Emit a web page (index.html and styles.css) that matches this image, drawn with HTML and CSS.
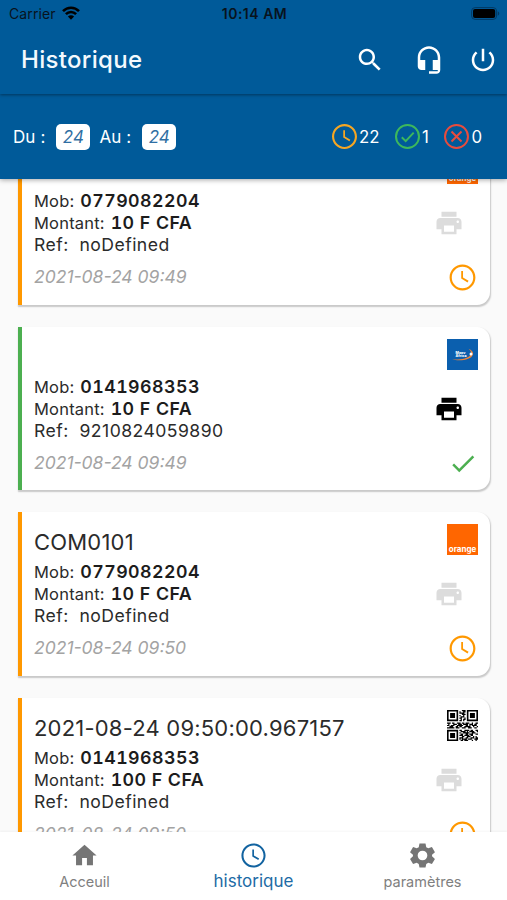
FILE: index.html
```html
<!DOCTYPE html>
<html lang="fr">
<head>
    <meta charset="utf-8" />
    <meta content="width=device-width, initial-scale=1.0" name="viewport" />
    <title>Historique</title>
    <link rel="stylesheet" href="styles.css">
</head>
<body>
    <!-- shared icons -->
    <svg class="icon-defs" aria-hidden="true">
        <symbol id="icon-clock" viewBox="0 0 24 24">
            <path d="M12 2C6.500 2 2 6.500 2 12s4.500 10 10 10 10-4.500 10-10S17.500 2 12 2zm0 18.300c-4.600 0-8.300-3.700-8.300-8.300S7.400 3.700 12 3.700s8.300 3.700 8.300 8.300-3.700 8.300-8.300 8.300z" />
            <path d="M12.400 7h-1.400v5.800l4.900 3 .8-1.300-4.300-2.500z" />
        </symbol>
        <symbol id="icon-print" viewBox="0 0 24 24">
            <path d="M19 8H5c-1.660 0-3 1.340-3 3v6h4v4h12v-4h4v-6c0-1.660-1.340-3-3-3zm-3 11H8v-5h8v5zm3-7c-.55 0-1-.45-1-1s.45-1 1-1 1 .45 1 1-.45 1-1 1zm-1-9H6v4h12V3z" />
        </symbol>
        <symbol id="icon-check" viewBox="0 0 24 24">
            <path d="M9 16.170L4.830 12l-1.420 1.410L9 19 21 7l-1.410-1.410z" />
        </symbol>
    </svg>

    <div class="app">
        <header class="header">
            <div class="status-bar">
                <div class="carrier">
                    <span>Carrier</span>
                    <svg class="wifi" viewBox="0 0 18 14">
                        <path d="M1 5.200C5.500.6 12.500.6 17 5.200" />
                        <path d="M3.900 8.100c2.900-2.900 7.300-2.900 10.200 0" />
                        <path class="wifi-dot" d="M9 13.800L5.900 10.500c1.700-1.700 4.500-1.700 6.200 0z" />
                    </svg>
                </div>
                <span class="time">10:14 AM</span>
                <svg class="battery" viewBox="0 0 29 13">
                    <rect class="battery-shell" x=".6" y=".6" width="25" height="11.800" rx="3.500" />
                    <rect x="2" y="2" width="22.200" height="9" rx="2" />
                    <path class="battery-tip" d="M26.800 4.300c2 .8 2 3.600 0 4.400z" />
                </svg>
            </div>
            <div class="toolbar">
                <h1 class="title">Historique</h1>
                <svg class="tool search" viewBox="0 0 24 24"><path d="M15.500 14h-.79l-.28-.27C15.410 12.590 16 11.110 16 9.500 16 5.910 13.090 3 9.500 3S3 5.910 3 9.500 5.910 16 9.500 16c1.610 0 3.090-.59 4.230-1.570l.27.28v.79l5 4.990L20.490 19l-4.990-5zm-6 0C7.010 14 5 11.990 5 9.500S7.010 5 9.500 5 14 7.010 14 9.500 11.990 14 9.500 14z" /></svg>
                <svg class="tool headset" viewBox="0 0 24 24"><path d="M12 1c-4.970 0-9 4.030-9 9v7c0 1.660 1.340 3 3 3h3v-8H5v-2c0-3.870 3.130-7 7-7s7 3.130 7 7v2h-4v8h4v1h-7v2h6c1.660 0 3-1.340 3-3V10c0-4.970-4.030-9-9-9z" /></svg>
                <svg class="tool power" viewBox="0 0 24 24"><path d="M13 3h-2v10h2V3zm4.830 2.170l-1.420 1.420C17.990 7.860 19 9.810 19 12c0 3.870-3.130 7-7 7s-7-3.130-7-7c0-2.190 1.010-4.140 2.580-5.420L6.170 5.170C4.230 6.820 3 9.260 3 12c0 4.970 4.030 9 9 9s9-4.030 9-9c0-2.740-1.230-5.180-3.170-6.830z" /></svg>
            </div>
        </header>

        <section class="filters">
            <span class="filter-label">Du :</span>
            <span class="date-box">24</span>
            <span class="filter-label">Au :</span>
            <span class="date-box">24</span>
            <div class="counters">
                <div class="counter pending">
                    <svg viewBox="2 2 20 20"><use href="#icon-clock" width="24" height="24" /></svg>
                    <span>22</span>
                </div>
                <div class="counter success">
                    <svg viewBox="0 0 25 25"><circle cx="12.500" cy="12.500" r="11.500" /><path d="M6.800 13.200l3.900 3.900 8-8.500" /></svg>
                    <span>1</span>
                </div>
                <div class="counter failed">
                    <svg viewBox="0 0 25 25"><circle cx="12.500" cy="12.500" r="11.500" /><path d="M7.500 7.500l10 10M17.500 7.500l-10 10" /></svg>
                    <span>0</span>
                </div>
            </div>
        </section>

        <main class="list">
            <article class="card pending">
                <div class="card-info">
                    <h2 class="card-title"></h2>
                    <p class="line">Mob: <b>0779082204</b></p>
                    <p class="line">Montant: <b>10 F CFA</b></p>
                    <p class="line ref">Ref:&nbsp; noDefined</p>
                    <p class="date">2021-08-24 09:49</p>
                </div>
                <div class="card-side">
                    <div class="logo orange">orange</div>
                    <svg class="print"><use href="#icon-print" /></svg>
                    <svg class="state"><use href="#icon-clock" /></svg>
                </div>
            </article>

            <article class="card success">
                <div class="card-info">
                    <h2 class="card-title"></h2>
                    <p class="line">Mob: <b>0141968353</b></p>
                    <p class="line">Montant: <b>10 F CFA</b></p>
                    <p class="line ref">Ref:&nbsp; 9210824059890</p>
                    <p class="date">2021-08-24 09:49</p>
                </div>
                <div class="card-side">
                    <svg class="logo" viewBox="0 0 31 31">
                        <rect width="31" height="31" fill="#0b5fae" />
                        <path d="M5 20.500c7 1.600 20 1 21-5.500.3-2.300-1.500-4-4.500-5.200 2.500 2 3.100 3.800 2 5.900-2.200 4-10.500 5.200-18.500 4.800z" fill="#e8833a" />
                        <circle cx="24" cy="15" r="1.500" fill="#fff" />
                        <text class="logo-text" x="8.500" y="14.500">Moov</text>
                        <text class="logo-text" x="8.500" y="18">Africa</text>
                    </svg>
                    <svg class="print"><use href="#icon-print" /></svg>
                    <svg class="state"><use href="#icon-check" /></svg>
                </div>
            </article>

            <article class="card pending">
                <div class="card-info">
                    <h2 class="card-title">COM0101</h2>
                    <p class="line">Mob: <b>0779082204</b></p>
                    <p class="line">Montant: <b>10 F CFA</b></p>
                    <p class="line ref">Ref:&nbsp; noDefined</p>
                    <p class="date">2021-08-24 09:50</p>
                </div>
                <div class="card-side">
                    <div class="logo orange">orange</div>
                    <svg class="print"><use href="#icon-print" /></svg>
                    <svg class="state"><use href="#icon-clock" /></svg>
                </div>
            </article>

            <article class="card pending">
                <div class="card-info">
                    <h2 class="card-title">2021-08-24 09:50:00.967157</h2>
                    <p class="line">Mob: <b>0141968353</b></p>
                    <p class="line">Montant: <b>100 F CFA</b></p>
                    <p class="line ref">Ref:&nbsp; noDefined</p>
                    <p class="date">2021-08-24 09:50</p>
                </div>
                <div class="card-side">
                    <svg class="logo" viewBox="0 0 25 25">
                        <path d="M0 0h9v9H0zM1.300 1.300v6.400h6.400V1.300zM16 0h9v9h-9zM17.300 1.300v6.400h6.400V1.300zM0 16h9v9H0zM1.300 17.300v6.400h6.400v-6.400z" fill-rule="evenodd" />
                        <path d="M2.500 2.500h4v4h-4zM18.500 2.500h4v4h-4zM2.500 18.500h4v4h-4z" />
                        <path class="modules" d="M12 .5h3M10 1.500h1M13 1.500h2M10 2.500h4M12 3.500h3M10 4.500h1M13 4.500h1M11 5.500h3M10 6.500h2M14 6.500h1M11 7.500h1M13 7.500h2M10 8.500h2M13 8.500h1M0 10.500h3M4 10.500h2M8 10.500h3M12 10.500h2M15 10.500h3M20 10.500h1M23 10.500h2M1 11.500h1M5 11.500h3M9 11.500h3M13 11.500h4M18 11.500h3M22 11.500h2M0 12.500h2M3 12.500h3M8 12.500h5M15 12.500h2M18 12.500h1M20 12.500h4M2 13.500h3M7 13.500h2M10 13.500h2M14 13.500h5M21 13.500h1M24 13.500h1M0 14.500h6M7 14.500h3M12 14.500h3M17 14.500h3M22 14.500h2M10 16.500h2M14 16.500h4M19 16.500h2M23 16.500h2M11 17.500h4M16 17.500h1M18 17.500h4M24 17.500h1M10 18.500h1M13 18.500h5M20 18.500h3M11 19.500h2M15 19.500h2M18 19.500h3M23 19.500h2M10 20.500h3M14 20.500h4M19 20.500h2M12 21.500h2M16 21.500h3M21 21.500h1M23 21.500h1M10 22.500h3M15 22.500h2M19 22.500h3M23 22.500h2M10 23.500h1M12 23.500h4M17 23.500h3M22 23.500h3M11 24.500h2M14 24.500h3M20 24.500h1M23 24.500h1" />
                    </svg>
                    <svg class="print"><use href="#icon-print" /></svg>
                    <svg class="state"><use href="#icon-clock" /></svg>
                </div>
            </article>
        </main>

        <nav class="bottom-nav">
            <a class="nav-item">
                <svg viewBox="0 0 24 24"><path d="M10 20v-6h4v6h5v-8h3L12 3 2 12h3v8z" /></svg>
                <span>Acceuil</span>
            </a>
            <a class="nav-item active">
                <svg><use href="#icon-clock" /></svg>
                <span>historique</span>
            </a>
            <a class="nav-item">
                <svg viewBox="0 0 24 24"><path fill-rule="evenodd" d="M9.500 2h5l.6 3.100 1.700 1 3-1.100 2.500 4.300-2.400 2.100v1.300l2.400 2.100-2.500 4.300-3-1.100-1.700 1-.6 3h-5l-.6-3-1.700-1-3 1.100-2.500-4.300 2.400-2.100v-1.300L1.700 9.300 4.200 5l3 1.100 1.700-1zM12 8a4 4 0 1 0 0 8 4 4 0 0 0 0-8z" /></svg>
                <span>paramètres</span>
            </a>
        </nav>
    </div>
</body>
</html>
```
FILE: styles.css
```css
* {
    box-sizing: border-box;
}

body {
    margin: 0;
    font-family: Inter, "Liberation Sans", sans-serif;
    color: #2b2b2b;
    background-color: #fafafa;
}

h1, h2, p {
    margin: 0;
    font-weight: 400;
}

.icon-defs {
    display: none;
}

.app {
    display: flex;
    flex-direction: column;
    height: 900px;
    overflow: hidden;
}

/* Header */
.header {
    flex: none;
    height: 94px;
    background-color: #005a99;
    box-shadow: 0 1px 3px rgba(0, 0, 0, 0.4);
    z-index: 3;
}

.status-bar {
    display: grid;
    grid-template-columns: 1fr auto 1fr;
    align-items: center;
    height: 27px;
    padding: 0 7px 0 9px;
    font-size: 14px;
    color: #08131d;
}

.carrier {
    display: flex;
    align-items: center;
    gap: 6px;
    letter-spacing: 0.1px;
}

.wifi {
    width: 18px;
    height: 14px;
    margin-top: -2px;
    fill: none;
    stroke: #000;
    stroke-width: 2.6;
}

.wifi-dot {
    fill: #000;
    stroke: none;
}

.time {
    font-weight: 600;
    letter-spacing: 0.5px;
}

.battery {
    justify-self: end;
    width: 29px;
    height: 13px;
}

.battery-shell {
    fill: none;
    stroke: #003a64;
}

.battery-tip {
    fill: #003a64;
}

.toolbar {
    display: flex;
    align-items: center;
    height: 65px;
    padding: 0 9px 0 21px;
}

.title {
    margin-right: auto;
    font-size: 24px;
    font-weight: 500;
    letter-spacing: 0.3px;
    color: #f4f9fd;
}

.tool {
    width: 30px;
    height: 30px;
    fill: #fff;
}

.headset {
    margin: 0 24px 0 29px;
}

/* Filters */
.filters {
    flex: none;
    display: flex;
    align-items: center;
    height: 85px;
    padding: 0 25px 0 13px;
    font-size: 17px;
    color: #fff;
    background-color: #005a99;
    box-shadow: 0 1px 5px rgba(0, 0, 0, 0.35);
    z-index: 2;
}

.filter-label {
    letter-spacing: 0.1px;
}

.date-box {
    width: 34px;
    height: 26px;
    margin: 0 9px 0 11px;
    border-radius: 5px;
    line-height: 26px;
    text-align: center;
    font-style: italic;
    color: #2f6fa3;
    background-color: #fff;
}

.counters {
    display: flex;
    gap: 15px;
    margin-left: auto;
}

.counter {
    display: flex;
    align-items: center;
    gap: 2.500px;
    font-size: 16.800px;
}

.counter svg {
    width: 25px;
    height: 25px;
    fill: none;
    stroke: currentColor;
    stroke-width: 2;
}

.counter.pending svg {
    fill: #f5a623;
    stroke: none;
}

.counter.success svg {
    color: #3db85c;
}

.counter.failed svg {
    color: #e84c3d;
}

/* Transactions */
.list {
    flex: 1;
    display: flex;
    flex-direction: column;
    gap: 22px;
    min-height: 0;
    padding: 0 17px 0 18px;
    overflow: hidden;
}

.card {
    flex: none;
    display: flex;
    justify-content: space-between;
    height: 163.700px;
    padding: 12px 12px 0 12px;
    border-left: 4px solid #ff9800;
    border-radius: 0 13px 13px 0;
    background-color: #fff;
    box-shadow: 0.500px 1.500px 1.500px rgba(0, 0, 0, 0.2);
}

/* the list is scrolled down a little */
.card:first-child {
    margin-top: -38px;
}

.card.success {
    border-left-color: #4caf50;
}

.card-title {
    height: 37px;
    padding-top: 4px;
    font-size: 22px;
    line-height: 28px;
    letter-spacing: 0.2px;
}

.line {
    height: 22px;
    font-size: 16.500px;
    line-height: 22px;
    letter-spacing: 0.2px;
    white-space: nowrap;
}

.line b {
    margin-left: 1px;
    font-size: 17.800px;
    font-weight: 600;
    font-variant-numeric: tabular-nums;
    letter-spacing: 0.450px;
    color: #1c1c1c;
}

.line.ref {
    font-size: 17.600px;
    letter-spacing: 0.450px;
}

.date {
    margin-top: 10px;
    font-size: 17.500px;
    line-height: 22px;
    font-style: italic;
    color: #a3a3a3;
}

.card-side {
    display: flex;
    flex-direction: column;
    align-items: flex-end;
    width: 60px;
}

.logo {
    width: 31px;
    height: 31px;
}

.logo.orange {
    padding-top: 20px;
    font-size: 8px;
    font-weight: 700;
    line-height: 10px;
    text-align: center;
    color: #fff;
    background-color: #ff6600;
}

.logo-text {
    font-size: 3.600px;
    font-weight: 800;
    fill: #fff;
}

.modules {
    stroke: #000;
    stroke-width: 1;
}

.print {
    width: 30px;
    height: 30px;
    margin: 24px 14.500px 0 0;
    fill: #dcdcdc;
}

.success .print {
    fill: #000;
}

.state {
    width: 31px;
    height: 31px;
    margin-top: 24px;
    fill: #ff9800;
}

.card.success .state {
    width: 30px;
    fill: #4caf50;
}

/* Bottom navigation */
.bottom-nav {
    flex: none;
    display: grid;
    grid-template-columns: repeat(3, 1fr);
    height: 68px;
    background-color: #fff;
    box-shadow: 0 -1px 2px rgba(0, 0, 0, 0.04);
    z-index: 2;
}

.nav-item {
    display: flex;
    flex-direction: column;
    align-items: center;
    padding-top: 9px;
    font-size: 14.500px;
    line-height: 20px;
    color: #808080;
}

.nav-item svg {
    width: 29px;
    height: 29px;
    fill: #757575;
}

.nav-item span {
    margin-top: 2px;
}

.nav-item.active {
    font-size: 17px;
    color: #1d6ba5;
}

.nav-item.active span {
    margin-top: 1px;
}

.nav-item.active svg {
    fill: #1263a0;
}
```
